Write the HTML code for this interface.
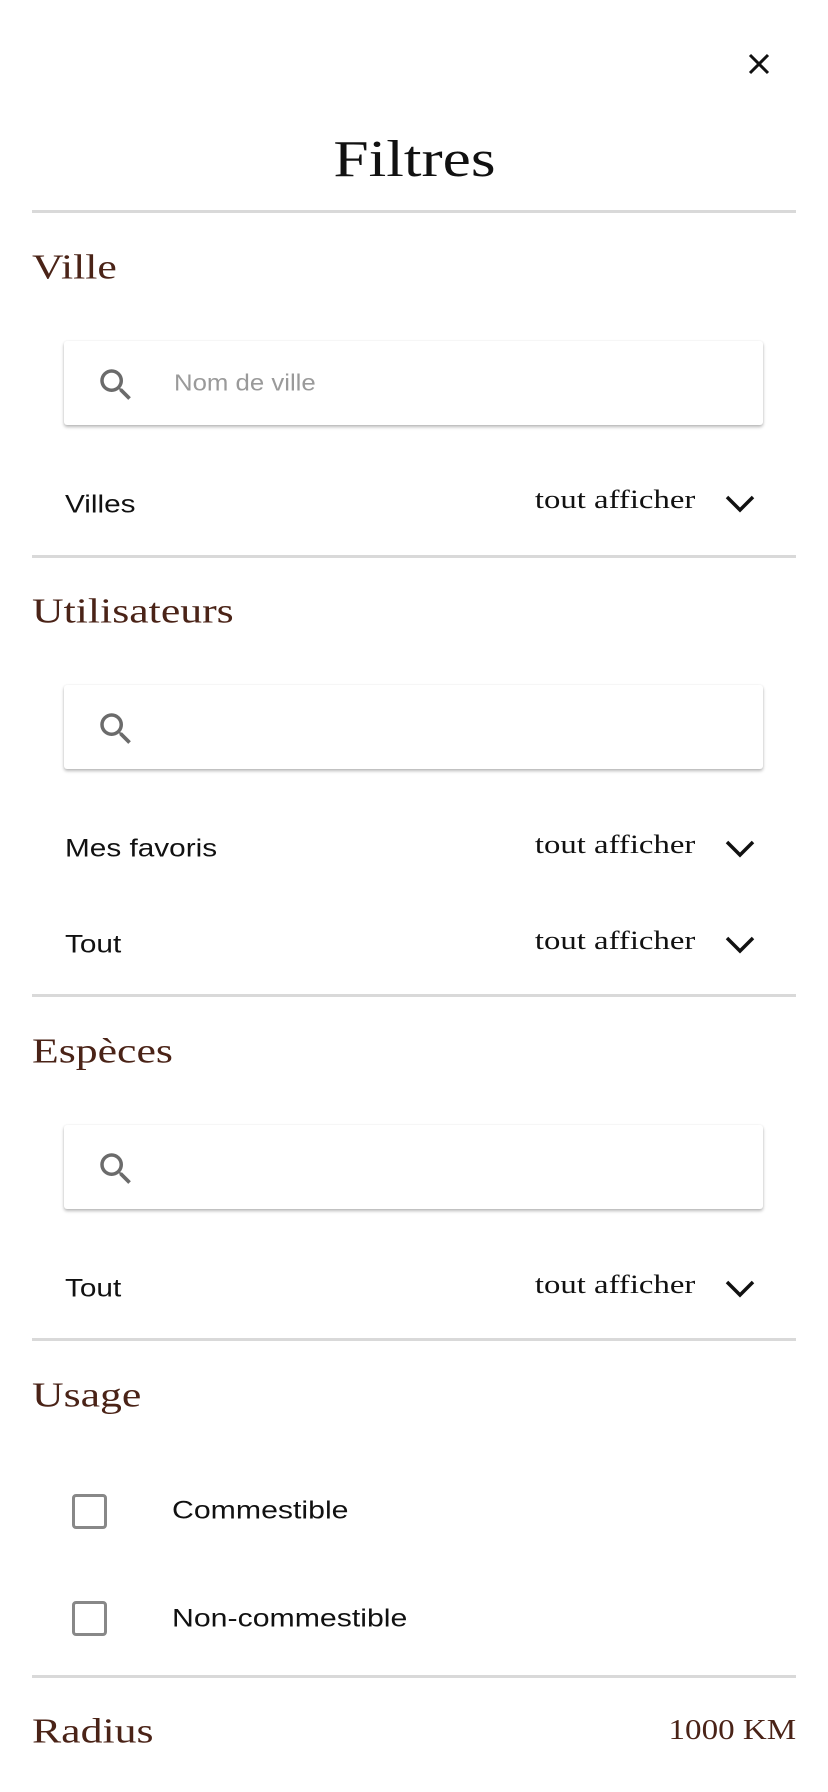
<!DOCTYPE html>
<html><head><meta charset="utf-8"><style>
*{margin:0;padding:0;box-sizing:border-box}
body{width:828px;height:1792px;background:#fff;position:relative;overflow:hidden;font-family:"Liberation Sans",sans-serif;color:#111}
.a{position:absolute}
.hr{position:absolute;left:32px;width:764px;height:3px;background:#d9d9d9}
.h{position:absolute;left:32px;font-family:"Liberation Serif",serif;font-size:35px;color:#4a2317;line-height:1;transform:translateY(-50%) scaleX(1.25);transform-origin:left center}
.box{position:absolute;left:64px;width:699px;height:84px;background:#fff;border-radius:3px;box-shadow:0 2px 3px rgba(0,0,0,.28),0 0 2px rgba(0,0,0,.06)}
.box svg{position:absolute;left:31px;top:23px}
.row{position:absolute;left:65px;font-size:25px;line-height:1;transform:translateY(-50%) scaleX(1.19);transform-origin:left center}
.ta{position:absolute;right:133px;font-family:"Liberation Serif",serif;font-size:26px;line-height:1;transform:translateY(-50%) scaleX(1.26);transform-origin:right center}
.chev{position:absolute;left:724px}
.cb{position:absolute;left:72px;width:35px;height:35px;border:3px solid #888;border-radius:4px}
.lb{position:absolute;left:172px;font-size:25px;line-height:1;transform:translateY(-50%) scaleX(1.21);transform-origin:left center}
</style></head><body>
<svg class="a" style="left:748px;top:53px" width="22" height="22" viewBox="0 0 22 22"><path d="M2 2L20 20M20 2L2 20" stroke="#111" stroke-width="3"/></svg>
<div class="a" style="left:0;width:828px;top:160px;text-align:center;line-height:1"><span style="display:inline-block;font-family:'Liberation Serif',serif;font-size:52px;transform:translateY(-50%) scaleX(1.22)">Filtres</span></div>
<div class="hr" style="top:210px"></div>

<div class="h" style="top:267px">Ville</div>
<div class="box" style="top:341px"><svg width="42" height="42" viewBox="0 0 24 24"><path fill="#6b6b6b" d="M15.5 14h-.79l-.28-.27A6.47 6.47 0 0016 9.5 6.5 6.5 0 109.5 16c1.61 0 3.09-.59 4.23-1.57l.27.28v.79l5 4.99L20.49 19l-4.99-5zm-6 0C7.01 14 5 11.990 5 9.5S7.01 5 9.5 5 14 7.01 14 9.5 11.99 14 9.5 14z"/></svg><div class="a" style="left:110px;top:42px;transform:translateY(-50%) scaleX(1.12);transform-origin:left center;font-size:23px;color:#9a9a9a">Nom de ville</div></div>
<div class="row" style="top:505px">Villes</div>
<div class="ta" style="top:500px">tout afficher</div>
<svg class="chev" style="top:493px" width="32" height="22" viewBox="0 0 32 22"><path d="M3 4L16 17L29 4" fill="none" stroke="#111" stroke-width="3.5"/></svg>
<div class="hr" style="top:555px"></div>

<div class="h" style="top:611px">Utilisateurs</div>
<div class="box" style="top:685px"><svg width="42" height="42" viewBox="0 0 24 24"><path fill="#6b6b6b" d="M15.5 14h-.79l-.28-.27A6.47 6.47 0 0016 9.5 6.5 6.5 0 109.5 16c1.61 0 3.090-.59 4.23-1.57l.27.28v.79l5 4.99L20.49 19l-4.99-5zm-6 0C7.01 14 5 11.99 5 9.5S7.01 5 9.5 5 14 7.01 14 9.5 11.99 14 9.5 14z"/></svg></div>
<div class="row" style="top:849px">Mes favoris</div>
<div class="ta" style="top:845px">tout afficher</div>
<svg class="chev" style="top:838px" width="32" height="22" viewBox="0 0 32 22"><path d="M3 4L16 17L29 4" fill="none" stroke="#111" stroke-width="3.5"/></svg>
<div class="row" style="top:945px">Tout</div>
<div class="ta" style="top:941px">tout afficher</div>
<svg class="chev" style="top:934px" width="32" height="22" viewBox="0 0 32 22"><path d="M3 4L16 17L29 4" fill="none" stroke="#111" stroke-width="3.5"/></svg>
<div class="hr" style="top:994px"></div>

<div class="h" style="top:1051px">Espèces</div>
<div class="box" style="top:1125px"><svg width="42" height="42" viewBox="0 0 24 24"><path fill="#6b6b6b" d="M15.5 14h-.79l-.28-.27A6.47 6.47 0 0016 9.5 6.5 6.5 0 109.5 16c1.61 0 3.09-.59 4.23-1.57l.27.28v.79l5 4.99L20.49 19l-4.99-5zm-6 0C7.01 14 5 11.99 5 9.5S7.01 5 9.5 5 14 7.01 14 9.5 11.99 14 9.5 14z"/></svg></div>
<div class="row" style="top:1289px">Tout</div>
<div class="ta" style="top:1285px">tout afficher</div>
<svg class="chev" style="top:1278px" width="32" height="22" viewBox="0 0 32 22"><path d="M3 4L16 17L29 4" fill="none" stroke="#111" stroke-width="3.5"/></svg>
<div class="hr" style="top:1338px"></div>

<div class="h" style="top:1395px">Usage</div>
<div class="cb" style="top:1494px"></div>
<div class="lb" style="top:1511px">Commestible</div>
<div class="cb" style="top:1601px"></div>
<div class="lb" style="top:1619px">Non-commestible</div>
<div class="hr" style="top:1675px"></div>

<div class="h" style="top:1731px">Radius</div>
<div class="a" style="right:32px;top:1731px;transform:translateY(-50%) scaleX(1.18);transform-origin:right center;font-family:'Liberation Serif',serif;font-size:28px;color:#4a2317;line-height:1">1000 KM</div>
</body></html>
